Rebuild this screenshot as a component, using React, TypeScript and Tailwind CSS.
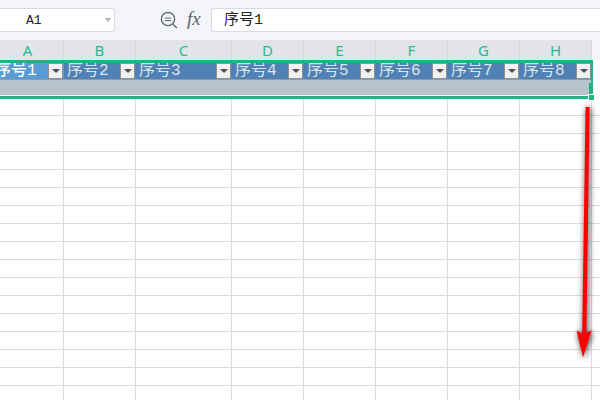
const COLS = [
  { letter: "A", label: "序号1", active: true },
  { letter: "B", label: "序号2" },
  { letter: "C", label: "序号3" },
  { letter: "D", label: "序号4" },
  { letter: "E", label: "序号5" },
  { letter: "F", label: "序号6" },
  { letter: "G", label: "序号7" },
  { letter: "H", label: "序号8" },
];

const GRID = "grid grid-cols-[72px_72px_96px_72px_72px_72px_72px_72px_1fr]";
const CJK = { fontFamily: '"Liberation Mono", "Noto Sans CJK SC", monospace' };

function FilterButton() {
  return (
    <div className="w-[15px] h-[16px] mr-[1px] shrink-0 bg-[#f1f1f4] border-[1.5px] border-[#8f8f9e] flex items-center justify-center">
      <div className="w-0 h-0 border-x-[4px] border-x-transparent border-t-[4px] border-t-[#4a4a55]" />
    </div>
  );
}

export default function App() {
  return (
    <div className="relative w-[600px] h-[400px] overflow-hidden bg-white">
      {/* formula bar */}
      <div className="h-[40px] bg-[#f4f5f8] pt-[8px] flex items-start">
        <div className="w-[115px] h-[24px] bg-white border border-l-0 border-[#d9dbe1] rounded-r-[3px] flex items-center justify-between pr-[3px] pl-[26px]">
          <span className="text-[13px] text-[#222] leading-none" style={CJK}>A1</span>
          <div className="w-0 h-0 border-x-[3px] border-x-transparent border-t-[4px] border-t-[#a9adb8]" />
        </div>
        <svg width="20" height="20" viewBox="0 0 20 20" className="ml-[44px] mt-[3px] shrink-0" fill="none" stroke="#5c6472" strokeWidth="1.3">
          <circle cx="9" cy="8" r="6.6" />
          <path d="M6 7h6M6 9.5h6" strokeWidth="1" />
          <path d="M13.8 13l4 4" />
        </svg>
        <span className="ml-[8px] w-[24px] text-[19px] leading-[22px] italic text-[#5c6472]" style={{ fontFamily: '"Liberation Serif", serif' }}>fx</span>
        <div className="flex-1 h-[24px] bg-white border border-r-0 border-[#d9dbe1] rounded-l-[3px] flex items-center pl-[12px]">
          <span className="text-[15px] text-[#222] leading-none" style={CJK}>序号1</span>
        </div>
      </div>

      {/* sheet */}
      <div className="ml-[-8px] w-[608px]">
        <div className={`${GRID} h-[20px]`}>
          {COLS.map((c) => (
            <div key={c.letter} className="bg-[#e3e4ea] border-r border-[#d6d8e0] flex items-center justify-center text-[15px] text-[#1fbd8d] leading-none" style={{ fontFamily: '"Noto Sans", sans-serif' }}>
              {c.letter}
            </div>
          ))}
          <div className="bg-[#f4f5f8]" />
        </div>
        <div className={`${GRID} h-[20px]`}>
          {COLS.map((c) => (
            <div key={c.letter} className="flex flex-col">
              <div className="h-[3px]" />
              <div className={`h-[16px] flex items-center justify-between pl-[3px] ${c.active ? "bg-[#5b9bd5] text-white" : "bg-[#4f81b5] text-[#dfe4ea]"}`}>
                <span className={`text-[16px] leading-none whitespace-nowrap ${c.active ? "font-medium" : "font-normal"}`} style={CJK}>{c.label}</span>
                <FilterButton />
              </div>
              <div className="h-[1px] bg-[#8c9ab0]" />
            </div>
          ))}
          <div />
        </div>
        <div className={`${GRID} h-[18px]`}>
          {COLS.map((c) => <div key={c.letter} className="bg-[#b8c5cf]" />)}
          <div />
        </div>
        {Array.from({ length: 17 }).map((_, r) => (
          <div key={r} className={`${GRID} h-[18px]`}>
            {COLS.map((c) => <div key={c.letter} className="border-r border-b border-[#d8dbe2]" />)}
            <div className="border-b border-[#d8dbe2]" />
          </div>
        ))}
      </div>

      {/* selection box */}
      <div className="absolute left-[-8px] top-[60px] w-[600.5px] h-[39px] border-x-[2px] border-y-[3px] border-[#1fb57f]">
        <div className="absolute inset-x-0 bottom-0 h-[1px] bg-white" />
        <div className="absolute right-0 bottom-0 top-[20px] w-[2px] bg-[#1fb57f]" />
      </div>
      <div className="absolute left-[588px] top-[94px] w-[7px] h-[7px] bg-[#1fb57f] border border-white" />

      {/* red arrow */}
      <svg width="40" height="270" viewBox="0 0 40 270" className="absolute left-[560px] top-[100px] drop-shadow-[1px_1px_3px_rgba(0,0,0,0.85)]">
        <path d="M25.6 7h4L26.4 233l5.1-2.5-8.5 27-6.5-27 5.7 3z" fill="#ff0000" />
      </svg>
    </div>
  );
}
